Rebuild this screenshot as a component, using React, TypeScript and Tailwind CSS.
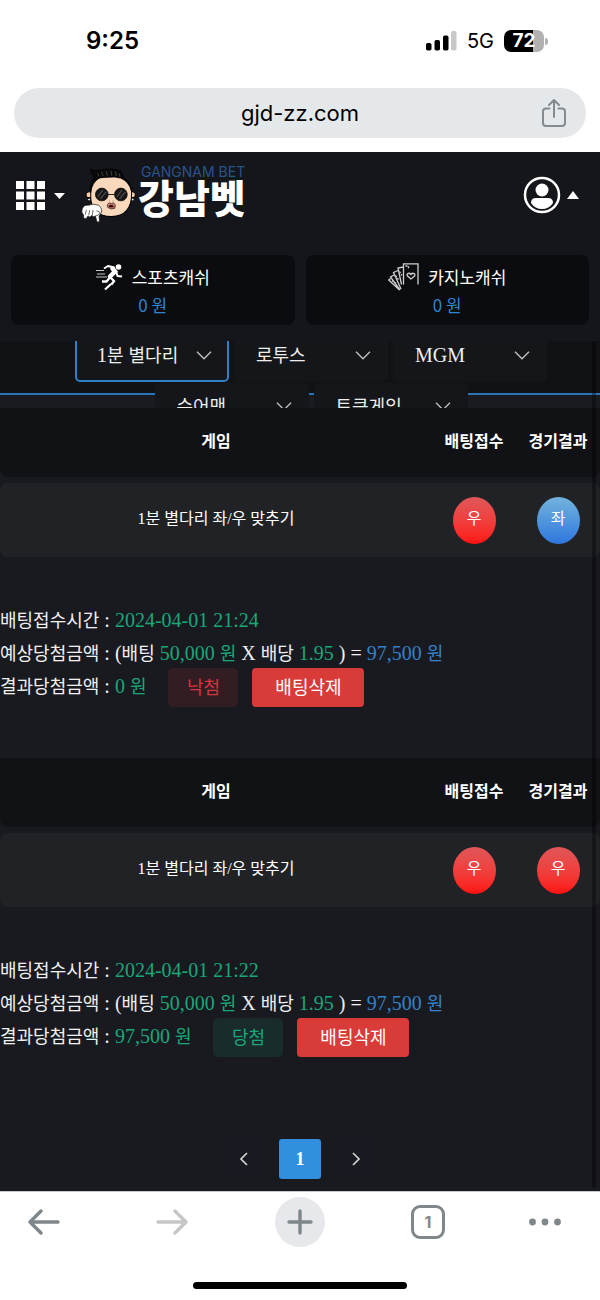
import React from "react";

const KR = "font-['Noto_Sans_CJK_KR',sans-serif]";
const SERIF = "font-['Liberation_Serif','Noto_Sans_CJK_KR',serif]";
const UI = "font-[Inter,'Noto_Sans_CJK_KR',sans-serif]";

function Ko({ children }: { children: React.ReactNode }) {
  return <span className="text-[18px]">{children}</span>;
}

function StatusBar() {
  return (
    <div className="flex h-[82px] items-center justify-between pr-[52px] pl-[86px]">
      <span className="text-[24px] font-semibold">9:25</span>
      <div className="flex items-center gap-[10px]">
        <svg width="31" height="20" viewBox="0 0 31 20" aria-hidden="true">
          <rect x="0" y="12" width="5.5" height="7.5" rx="1.8" />
          <rect x="8.5" y="9" width="5.5" height="10.5" rx="1.8" />
          <rect x="17" y="4.5" width="5.5" height="15" rx="1.8" />
          <rect x="25" y="0" width="5.5" height="19.5" rx="1.8" fill="#c8c8c8" />
        </svg>
        <span className="text-[20px]">5G</span>
        <div className="flex items-center gap-px">
          <div className="flex h-[22px] w-[40px] items-center justify-center rounded-[7px] bg-[linear-gradient(90deg,#000_72%,#b1b1b1_72%)] text-[19px] font-bold text-white">
            72
          </div>
          <div className="h-[7px] w-[3px] rounded-r-full bg-[#b1b1b1]" />
        </div>
      </div>
    </div>
  );
}

function AddressBar() {
  return (
    <div className="mx-[14px] mt-[6px] mb-[14px] flex h-[50px] items-center rounded-full bg-[#e5e8eb] pr-[20px] pl-[44px]">
      <a href="#" className="flex-1 text-center text-[22px]">gjd-zz.com</a>
      <button aria-label="공유">
        <svg width="24" height="30" viewBox="0 0 24 30" fill="none" stroke="#838a90" strokeWidth="2" strokeLinecap="round" strokeLinejoin="round">
          <path d="M7.5 10.5H4a3 3 0 0 0-3 3V25a3 3 0 0 0 3 3h16a3 3 0 0 0 3-3V13.500a3 3 0 0 0-3-3h-3.500M12 19V2M7 7l5-5 5 5" />
        </svg>
      </button>
    </div>
  );
}

function Mascot() {
  return (
    <svg width="57" height="57" viewBox="30 20 170 170" aria-hidden="true">
      <circle cx="57" cy="103" r="9" fill="#f8cfae" stroke="#000" strokeWidth="3" />
      <circle cx="186" cy="103" r="9" fill="#f8cfae" stroke="#000" strokeWidth="3" />
      <circle cx="57" cy="117" r="4" fill="#eee" stroke="#000" strokeWidth="2" />
      <circle cx="187" cy="117" r="4" fill="#eee" stroke="#000" strokeWidth="2" />
      <path d="M62 92Q62 48 122 46Q184 48 184 100Q184 166 124 168Q62 166 62 108Z" fill="#f9d8bb" stroke="#000" strokeWidth="3" />
      <path d="M60 26Q66 32 92 29Q130 21 151 33Q159 40 158 50Q180 62 184 92Q176 64 151 53L132 50L88 52Q66 66 62 96Q58 68 73 51Q64 42 60 26Z" fill="#090909" stroke="#000" strokeWidth="2" />
      <path d="M82 38l5 10M94 34l5 13M108 32l4 14M122 31l3 15M136 33l2 14M147 39l2 10" stroke="#665f54" strokeWidth="2" />
      <path d="M114 102H133" fill="none" stroke="#222" strokeWidth="3" />
      <circle cx="95" cy="102" r="19" fill="#171717" stroke="#000" strokeWidth="2" />
      <circle cx="152" cy="102" r="19" fill="#171717" stroke="#000" strokeWidth="2" />
      <path d="M83 109l15-20M91 115l17-21M140 109l15-20M148 115l17-21" stroke="#4b4b4b" strokeWidth="4" />
      <path d="M116 120l3 2M127 122l3-2" stroke="#966d53" strokeWidth="2" />
      <path d="M112 140Q109 129 119 127L124 129L129 127Q138 130 134 143Q123 149 112 140Z" fill="#c97768" stroke="#241716" strokeWidth="2" />
      <path d="M116 135Q124 131 131 137L129 140H117Z" fill="#24090c" />
      <path d="M86 134Q94 141 95 151Q92 160 87 166L88 180Q85 188 80 182L76 166Q67 171 66 164Q57 173 54 166L48 174Q39 176 41 163Q33 157 37 144Q42 132 55 134Q68 128 86 134Z" fill="#fff" stroke="#111" strokeWidth="2" />
      <path d="M49 148l-3 14M59 149l-3 15M69 148l-2 15M79 151Q89 151 90 158Q84 165 76 166" fill="none" stroke="#222" strokeWidth="2" />
    </svg>
  );
}

function RunnerIcon() {
  return (
    <svg width="28" height="28" viewBox="0 0 28 28" fill="none" stroke="#fff" aria-hidden="true">
      <path d="M0 7.500h8M1 11h8M0 14h11" stroke="#c8c8c8" strokeWidth="1.200" />
      <circle cx="22.500" cy="4" r="2.800" fill="#fff" stroke="none" />
      <path d="M8 5.500l4-2.500 6 1.500-1.500 2M20 8l1.500 5 4.500.5" strokeWidth="2" strokeLinejoin="round" />
      <path d="M16.500 5.500l2.500 3-5 5" strokeWidth="4.500" strokeLinecap="round" />
      <path d="M14 14l4 4-2.500 3.500M15 21l-6 5.500M13.500 15l-3 3.500H6" strokeWidth="2.300" />
    </svg>
  );
}

function CardsIcon() {
  return (
    <svg width="32" height="28" viewBox="0 0 32 28" fill="none" stroke="#cfcfcf" strokeWidth="1.300" aria-hidden="true">
      <path d="M30 21.500V.8H15.500V21.500M15 4l-5 1 3.500 16.500M10 7.500l-4.500 2 7.500 16.500M6 12l-3.500 2L12 27M2.500 15.500L.8 17 11.500 27" />
      <path d="M23 16l-3.500-3c-1.500-2 1.500-4 3.500-1.500 2-2.500 5-.5 3.500 1.500z" />
      <path d="M17.500 3h3v3M11.500 8.500l2.500 4M7.500 12.500l3 4M4 17.500l4 3" strokeDasharray="2 1.200" />
    </svg>
  );
}

function SiteHeader() {
  return (
    <header className="h-[189px] bg-[#15161b] text-white">
      <div className="flex h-[103px] items-start pr-[21px] pl-[16px]">
        <button aria-label="메뉴" className="mt-[29px] flex items-center gap-[9px]">
          <svg width="29" height="29" viewBox="0 0 29 29" fill="#fff">
            <path d="M0 0h8v8H0zM10.500 0h8v8h-8zM21 0h8v8h-8zM0 10.500h8v8H0zM10.500 10.500h8v8h-8zM21 10.500h8v8h-8zM0 21h8v8H0zM10.500 21h8v8h-8zM21 21h8v8h-8z" />
          </svg>
          <svg width="11" height="6" viewBox="0 0 11 6" fill="#fff"><path d="M0 0h11L5.500 6z" /></svg>
        </button>
        <a href="#" className="mt-[15px] ml-[15px] flex">
          <Mascot />
          <span className="flex flex-col">
            <span className={`${UI} ml-[4px] text-[14px] leading-[10px] text-[#28548c]`}>GANGNAM BET</span>
            <span className={`${KR} ml-px text-[39px] leading-[38px] font-black`}>강남벳</span>
          </span>
        </a>
        <button aria-label="내 정보" className="mt-[24px] ml-auto flex items-center gap-[6px]">
          <svg width="38" height="38" viewBox="0 0 38 38">
            <circle cx="19" cy="19" r="17" fill="none" stroke="#fff" strokeWidth="2.500" />
            <circle cx="19" cy="14" r="6.500" fill="#fff" />
            <path d="M8 27Q8 22 13 22h12q5 0 5 5Q26 33 19 33T8 27z" fill="#fff" />
          </svg>
          <svg width="12" height="8" viewBox="0 0 12 8" fill="#fff"><path d="M0 8h12L6 0z" /></svg>
        </button>
      </div>
      <div className={`${KR} grid grid-cols-2 gap-[11px] px-[11px] text-[17px]`}>
        <CashCard icon={<RunnerIcon />} label="스포츠캐쉬" />
        <CashCard icon={<CardsIcon />} label="카지노캐쉬" />
      </div>
    </header>
  );
}

function CashCard({ icon, label }: { icon: React.ReactNode; label: string }) {
  return (
    <div className="flex h-[70px] flex-col items-center rounded-lg bg-[#0b0c0f] pt-[8px]">
      <div className="flex h-[28px] items-center gap-[8px]">
        {icon}
        <span>{label}</span>
      </div>
      <span className="leading-[28px] text-[#2f85d0]">0 원</span>
    </div>
  );
}

const games: { label: React.ReactNode; active?: boolean }[] = [
  { label: <>1<Ko>분</Ko> <Ko>별다리</Ko></>, active: true },
  { label: <Ko>로투스</Ko> },
  { label: "MGM" },
  { label: <Ko>슈어맨</Ko> },
  { label: <Ko>토큰게임</Ko> },
];

function GameTabs() {
  return (
    <div className="h-[67px] overflow-hidden bg-[#191b21]">
      <nav className="flow-root h-[54px] border-b-2 border-[#2a73b5] bg-[#111215] pl-[22px]">
        <div className="-mt-[9px] flex flex-wrap justify-center gap-x-[5px] gap-y-px">
          {games.map((game, i) => (
            <button
              key={i}
              aria-haspopup="menu"
              className={`flex h-[50px] w-[154px] items-center justify-between rounded-[5px] border-2 pr-[15px] pb-[4px] pl-[20px] text-[20px] text-[#eee] ${
                game.active ? "border-[#2f80c8] bg-[#15161a]" : "border-[#14161a] bg-[#14161a]"
              }`}
            >
              <span className="leading-[26px] whitespace-nowrap">{game.label}</span>
              <svg width="16" height="9" viewBox="0 0 16 9" fill="none" stroke="#c4c4c4" strokeWidth="1.300" aria-hidden="true">
                <path d="M1 .8l7 7 7-7" />
              </svg>
            </button>
          ))}
        </div>
      </nav>
    </div>
  );
}

function Ball({ side }: { side: "좌" | "우" }) {
  return (
    <span
      className={`${KR} mx-auto flex h-[47px] w-[43px] items-center justify-center rounded-[50%] bg-linear-to-b pb-[6px] text-[16px] text-white ${
        side === "우" ? "from-[#e05658] to-[#fe0d0d]" : "from-[#73b3dc] to-[#2f76de]"
      }`}
    >
      {side}
    </span>
  );
}

type Bet = { pick: "좌" | "우"; result: "좌" | "우"; time: string; prize: string; won: boolean };

const bets: Bet[] = [
  { pick: "우", result: "좌", time: "2024-04-01 21:24", prize: "0", won: false },
  { pick: "우", result: "우", time: "2024-04-01 21:22", prize: "97,500", won: true },
];

function BetRecord({ bet }: { bet: Bet }) {
  const green = "text-[#18a878]";
  const blue = "text-[#3482c9]";
  return (
    <section className="-mt-[6px] mb-[51px]">
      <table className="w-full table-fixed border-separate border-spacing-x-0 border-spacing-y-[6px] text-center text-[16px] text-white">
        <colgroup>
          <col className="w-[72%]" />
          <col className="w-[14%]" />
          <col className="w-[14%]" />
        </colgroup>
        <thead>
          <tr className={`${KR} h-[69px] [&>th]:bg-[#111215] [&>th]:pb-[5px]`}>
            <th className="rounded-bl-lg font-bold">게임</th>
            <th className="font-bold whitespace-nowrap">배팅접수</th>
            <th className="rounded-br-lg font-bold whitespace-nowrap">경기결과</th>
          </tr>
        </thead>
        <tbody>
          <tr className="h-[74px] [&>td]:bg-[#212225]">
            <td className="rounded-l-lg pb-[2px]">1분 별다리 좌/우 맞추기</td>
            <td><Ball side={bet.pick} /></td>
            <td className="rounded-r-lg"><Ball side={bet.result} /></td>
          </tr>
        </tbody>
      </table>
      <div className="mt-[40px] text-[20px] leading-[34px] whitespace-nowrap text-[#f0f0f0]">
        <p className="h-[33px]">
          <Ko>배팅접수시간</Ko> : <span className={green}>{bet.time}</span>
        </p>
        <p className="h-[32px]">
          <Ko>예상당첨금액</Ko> : (<Ko>배팅</Ko> <span className={green}>50,000 <Ko>원</Ko></span> X <Ko>배당</Ko>{" "}
          <span className={green}>1.95</span> ) = <span className={blue}>97,500 <Ko>원</Ko></span>
        </p>
        <div className="flex h-[39px] items-stretch">
          <p className="leading-[37px]">
            <Ko>결과당첨금액</Ko> : <span className={green}>{bet.prize} <Ko>원</Ko></span>
          </p>
          <span
            className={`${KR} ml-[22px] flex w-[70px] items-center justify-center rounded-[5px] pb-[4px] text-[18px] ${
              bet.won ? "bg-[#192b2b] text-[#18a878]" : "bg-[#321d23] text-[#d83343]"
            }`}
          >
            {bet.won ? "당첨" : "낙첨"}
          </span>
          <button className={`${KR} ml-[14px] w-[112px] rounded-[4px] bg-[#d93b39] pb-[4px] text-[18px] text-white`}>
            배팅삭제
          </button>
        </div>
      </div>
    </section>
  );
}

function Pagination() {
  const arrow = "flex h-[40px] w-[42px] items-center justify-center rounded-[3px] bg-[#171a20]";
  return (
    <nav aria-label="페이지" className="flex justify-center gap-[14px] pt-[31px] pb-[12px]">
      <button aria-label="이전" className={arrow}>
        <svg width="8" height="14" viewBox="0 0 8 14" fill="none" stroke="#d0d0d0" strokeWidth="1.700"><path d="M7 1L1 7l6 6" /></svg>
      </button>
      <button className="h-[40px] w-[42px] rounded-[3px] bg-[#328fdd] text-[18px] font-bold text-white">1</button>
      <button aria-label="다음" className={arrow}>
        <svg width="8" height="14" viewBox="0 0 8 14" fill="none" stroke="#d0d0d0" strokeWidth="1.700"><path d="M1 1l6 6-6 6" /></svg>
      </button>
    </nav>
  );
}

function BrowserToolbar() {
  return (
    <footer className="overflow-hidden border-t border-[#c9c9cb] bg-white pt-[5px] pb-[11px]">
      <div className="-mx-5 grid h-[50px] grid-cols-5 place-items-center">
        <button aria-label="뒤로">
          <svg width="32" height="28" viewBox="0 0 32 28" fill="none" stroke="#7f878b" strokeWidth="3.400" strokeLinecap="round" strokeLinejoin="round"><path d="M30 14H2M13 3L2 14l11 11" /></svg>
        </button>
        <button aria-label="앞으로">
          <svg width="32" height="28" viewBox="0 0 32 28" fill="none" stroke="#c6c6c6" strokeWidth="3.400" strokeLinecap="round" strokeLinejoin="round"><path d="M2 14h28M19 3l11 11-11 11" /></svg>
        </button>
        <button aria-label="새 탭" className="flex size-[50px] items-center justify-center rounded-full bg-[#e6e8ec]">
          <svg width="26" height="26" viewBox="0 0 26 26" fill="none" stroke="#7f878b" strokeWidth="3.400" strokeLinecap="round"><path d="M2 13h22M13 2v22" /></svg>
        </button>
        <button className="h-[34px] w-[34px] rounded-[9px] border-[3px] border-[#7f878b] text-[16px] leading-none font-bold text-[#7f878b]">1</button>
        <button aria-label="더 보기" className="pr-[22px]">
          <svg width="32" height="8" viewBox="0 0 32 8" fill="#7f878b"><circle cx="3.500" cy="4" r="3.400" /><circle cx="16" cy="4" r="3.400" /><circle cx="28.500" cy="4" r="3.400" /></svg>
        </button>
      </div>
      <div className="mx-auto mt-[35px] h-[7px] w-[214px] rounded-full bg-black" />
    </footer>
  );
}

export default function App() {
  return (
    <div className={`${UI} min-h-screen bg-white text-black`}>
      <StatusBar />
      <AddressBar />
      <SiteHeader />
      <main className={`${SERIF} relative bg-[#191a20]`}>
        <GameTabs />
        {bets.map((bet) => <BetRecord key={bet.time} bet={bet} />)}
        <Pagination />
        <div aria-hidden="true" className="absolute top-0 right-[4px] bottom-[3px] w-[4px] rounded-b-full bg-black/35" />
      </main>
      <BrowserToolbar />
    </div>
  );
}
